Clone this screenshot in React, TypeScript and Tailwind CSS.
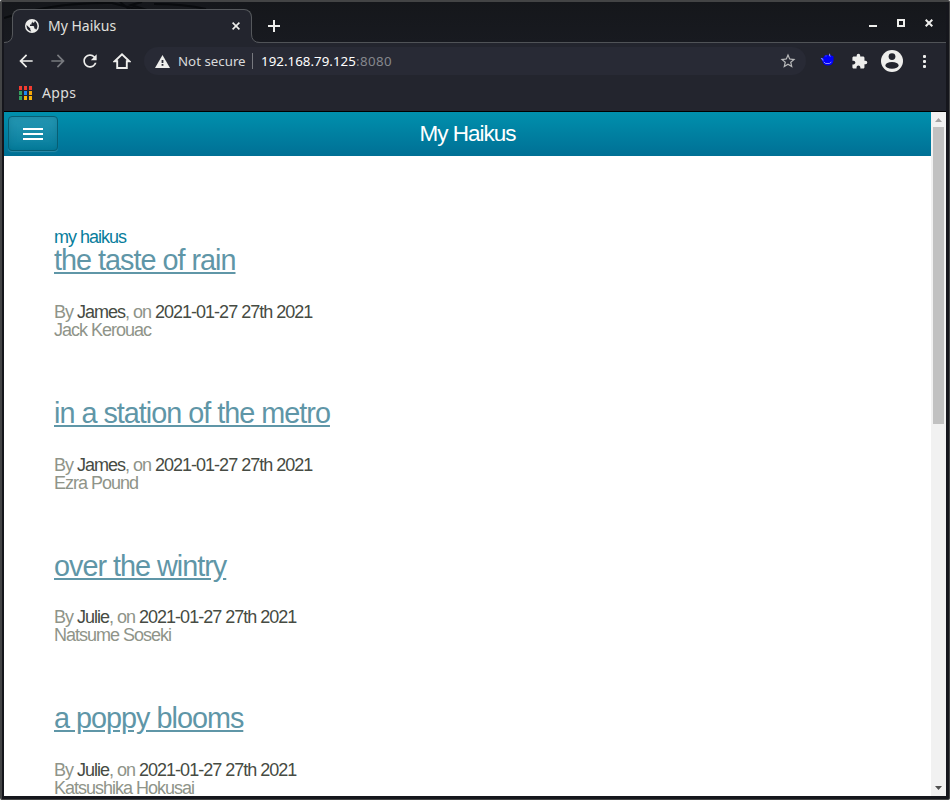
import React from "react";

const haikus = [
  { title: "the taste of rain", by: "James", author: "Jack Kerouac" },
  { title: "in a station of the metro", by: "James", author: "Ezra Pound" },
  { title: "over the wintry", by: "Julie", author: "Natsume Soseki" },
  { title: "a poppy blooms", by: "Julie", author: "Katsushika Hokusai" },
];

const appColors = [
  "bg-[#f23b30]", "bg-[#f23b30]", "bg-[#f23b30]",
  "bg-[#34a060]", "bg-[#1e88f0]", "bg-[#f5a70a]",
  "bg-[#34a060]", "bg-[#fbb508]", "bg-[#fbb508]",
];

function Icon({ d, className }: { d: string; className: string }) {
  return (
    <svg viewBox="0 0 24 24" className={`block shrink-0 fill-current ${className}`}>
      <path d={d} />
    </svg>
  );
}

function TitleBar() {
  return (
    <div className="relative flex h-[41px] border-b border-[#505357] bg-linear-to-b from-[#15171b] to-[#181a20]">
      <svg className="absolute left-0 top-0 h-[18px] w-[230px]" viewBox="0 0 230 18" fill="none">
        <path d="M0 16Q50 0 108 1L140 9M116 0l10 8M138 0l-11 3 16 5M150 2q30 0 52 5" stroke="#090b0e" strokeWidth="2" />
      </svg>
      <div className="relative ml-[8px] mt-[7px] flex h-[34px] w-[240px] rounded-t-[8px] border border-b-0 border-[#55585c] bg-[#23252e] text-[#e0e0de]">
        <svg className="absolute -left-[9px] bottom-0 h-[9px] w-[9px]" viewBox="0 0 9 9">
          <path d="M9 0v9H0Q8 8 8.5 0" fill="#23252e" />
          <path d="M0 8.5Q8.5 8.5 8.5 0" stroke="#55585c" fill="none" />
        </svg>
        <svg className="absolute -right-[9px] bottom-0 h-[9px] w-[9px]" viewBox="0 0 9 9">
          <path d="M0 0v9h9Q1 8 .5 0" fill="#23252e" />
          <path d="M9 8.5Q.5 8.5.5 0" stroke="#55585c" fill="none" />
        </svg>
        <svg viewBox="0 0 14 14" className="ml-[12px] mt-[9px] h-[14px] w-[14px] shrink-0">
          <circle cx="7" cy="7" r="7" fill="#eeeeec" />
          <path d="M8 1.2v1.4L6.5 4v1.4H5v1.5h3.4l.8.8v1.8h.8l1.2 1.2C13 8.5 13 5 10 2L9 3.7H7.8V2.4zM1.6 6.1l3.7 3.4v1.2l1 1.8C3.8 12.3 1.2 10 1.6 6.1z" fill="#23252e" />
        </svg>
        <span className="ml-[9px] mt-[6px] whitespace-nowrap text-[14px] leading-[20px]">My Haikus</span>
        <svg className="ml-auto mr-[11px] mt-[12px] h-[8px] w-[8px]" viewBox="0 0 8 8">
          <path d="m.6.6 6.8 6.8m0-6.8L.6 7.4" stroke="#eeeeec" strokeWidth="1.6" />
        </svg>
      </div>
      <svg className="ml-[16px] mt-[18px] h-[12px] w-[12px]" viewBox="0 0 12 12">
        <path d="M6 0v12M0 6h12" stroke="#eeeeec" strokeWidth="2" />
      </svg>
      <div className="ml-auto mr-[13px] mt-[17px] flex h-[8px] items-end">
        <div className="h-[2px] w-[8px] bg-[#eeeeec]" />
        <div className="ml-[20px] h-[8px] w-[8px] border-2 border-[#eeeeec]" />
        <svg className="ml-[20px] h-[8px] w-[8px]" viewBox="0 0 8 8">
          <path d="m.7.7 6.6 6.6m0-6.6L.7 7.3" stroke="#eeeeec" strokeWidth="2" />
        </svg>
      </div>
    </div>
  );
}

function Toolbar() {
  return (
    <div className="h-[69px] border-b border-black bg-[#23252e] text-[#eeeeec]">
      <div className="flex h-[36px] items-center pl-[12px]">
        <Icon className="h-5 w-5" d="M20 11H7.83l5.59-5.59L12 4l-8 8 8 8 1.41-1.41L7.83 13H20v-2z" />
        <Icon className="ml-[12px] h-5 w-5 text-[#77797e]" d="m12 4-1.41 1.41L16.17 11H4v2h12.17l-5.58 5.59L12 20l8-8z" />
        <Icon className="ml-[12px] h-5 w-5" d="M17.65 6.35C16.2 4.9 14.21 4 12 4c-4.42 0-7.99 3.58-7.99 8s3.57 8 7.99 8c3.73 0 6.84-2.55 7.73-6h-2.08c-.82 2.33-3.04 4-5.65 4-3.31 0-6-2.69-6-6s2.69-6 6-6c1.66 0 3.14.69 4.22 1.78L13 11h7V4l-2.35 2.35z" />
        <svg viewBox="0 0 18 18" className="ml-[13px] h-[18px] w-[18px] shrink-0">
          <path d="m1.7 9.2 7.3-7 7.3 7h-2.5V16H4.2V9.2z" fill="none" stroke="currentColor" strokeWidth="1.9" />
        </svg>
        <div className="ml-[13px] flex h-[28px] w-[662px] shrink-0 items-center rounded-full bg-[#282a35]">
          <svg className="ml-[11px] h-[13px] w-[15px]" viewBox="0 0 15 13">
            <path d="M7.5 0 15 13H0z" fill="#eeeeec" />
            <path d="M6.6 5h1.8v3H6.6zm0 4h1.8v1.8H6.6z" fill="#282a35" />
          </svg>
          <span className="ml-[8px] w-[67px] whitespace-nowrap text-[13.3px] leading-5 text-[#d9dadb]">Not secure</span>
          <span className="ml-[7px] h-4 w-px bg-[#77797f]" />
          <span className="ml-[8px] whitespace-nowrap text-[13.3px] leading-5 tracking-[0.04px] text-white">192.168.79.125<span className="tracking-[0.45px] text-[#85878d]">:8080</span></span>
          <Icon className="ml-auto mr-[9px] h-[18px] w-[18px] text-[#b9babb]" d="m22 9.24-7.19-.62L12 2 9.19 8.63 2 9.24l5.46 4.73L5.82 21 12 17.27 18.18 21l-1.63-7.03L22 9.24zM12 15.4l-3.76 2.27 1-4.28-3.32-2.88 4.38-.38L12 6.1l1.71 4.04 4.38.38-3.32 2.88 1 4.28L12 15.4z" />
        </div>
        <svg className="-mt-[3px] ml-[14px] h-[13px] w-[14px] shrink-0" viewBox="0 0 14 14">
          <path d="m0 5 3 .5L4 3l3-1 2 .5 1-2 1 2 3 1v5q-1 5-6 5-5 0-6-5z" fill="#0000fa" />
          <path d="m.5 6 1.8.3.5 2M5.5 3.2h.8M9.8.8v2.4l1 .4M3.5 9.5l2 1.8h4l2.2-1.5" fill="none" stroke="#dde" strokeWidth=".7" />
        </svg>
        <Icon className="ml-[17px] mr-px h-[17px] w-[17px]" d="M20.5 11H19V7c0-1.1-.9-2-2-2h-4V3.5a2.5 2.5 0 0 0-5 0V5H4c-1.1 0-1.99.9-1.99 2v3.8H3.5c1.49 0 2.7 1.21 2.7 2.7s-1.21 2.7-2.7 2.7H2V20c0 1.1.9 2 2 2h3.8v-1.5c0-1.49 1.21-2.7 2.7-2.7s2.7 1.21 2.7 2.7V22H17c1.1 0 2-.9 2-2v-4h1.5a2.5 2.5 0 0 0 0-5z" />
        <svg className="ml-[12px] h-[22px] w-[22px] shrink-0" viewBox="0 0 22 22">
          <circle cx="11" cy="11" r="11" fill="#eeeeec" />
          <circle cx="11" cy="6.6" r="3.4" fill="#23252e" />
          <ellipse cx="11" cy="15.4" rx="6.6" ry="3.3" fill="#23252e" />
        </svg>
        <div className="ml-[20px] flex flex-col gap-[2px]">
          <i className="h-[3px] w-[3px] rounded-[1px] bg-[#eeeeec]" />
          <i className="h-[3px] w-[3px] rounded-[1px] bg-[#eeeeec]" />
          <i className="h-[3px] w-[3px] rounded-[1px] bg-[#eeeeec]" />
        </div>
      </div>
      <div className="flex pl-[15px] pt-[4px]">
        <div className="mt-[3px] grid h-[14px] w-[13px] grid-cols-3 grid-rows-3 gap-x-[2px] gap-y-px">
          {appColors.map((c, i) => (
            <span key={i} className={`${c} h-[4px] w-[3px]`} />
          ))}
        </div>
        <span className="ml-[10px] text-[14px] leading-5 tracking-[0.4px] text-[#dededc]">Apps</span>
      </div>
    </div>
  );
}

export default function App() {
  return (
    <div className="flex h-[800px] w-[950px] flex-col overflow-hidden rounded-[2px] border-b border-l-2 border-r border-t-2 border-[#434445] bg-[#15161c] pb-[3px] pl-[2px] pr-[3px] font-['Noto_Sans',sans-serif]">
      <TitleBar />
      <Toolbar />
      <div className="flex min-h-0 flex-1 bg-white font-['Liberation_Sans',Arial,sans-serif]">
        <main className="min-w-0 flex-1 overflow-hidden text-[18px] leading-[18px] tracking-[-1px] text-[#8f9489]">
          <header className="grid h-[44px] grid-cols-[50px_1fr_50px] items-center bg-linear-to-b from-[#0090ad] to-[#007095] px-[4px]">
            <button className="-mt-px flex h-[35px] w-[50px] flex-col items-center justify-center gap-[3px] rounded-[4px] border border-[#075e73] bg-linear-to-b from-[#2498b4] to-[#047d9c] pt-px shadow-[0_1px_1px_rgba(255,255,255,0.18),inset_0_0_7px_rgba(0,90,115,0.3)]">
              <span className="h-[2px] w-5 bg-white" />
              <span className="h-[2px] w-5 bg-white" />
              <span className="h-[2px] w-5 bg-white" />
            </button>
            <h1 className="text-center text-[22.5px] leading-[28px] text-white">My Haikus</h1>
          </header>
          <div className="pl-[50px] pt-[72px]">
            <p className="text-[#077d9c]">my haikus</p>
            {haikus.map((h) => (
              <article key={h.title} className="h-[152.8px] whitespace-nowrap">
                <h2 className="text-[28.8px] leading-[28.8px] text-[#5f96a7]">
                  <a className="underline">{h.title}</a>
                </h2>
                <p className="mt-[28px]">
                  By <span className="text-[#464b43]">{h.by}</span>, on <span className="text-[#464b43]">2021-01-27 27th 2021</span>
                </p>
                <p>{h.author}</p>
              </article>
            ))}
          </div>
        </main>
        <div className="flex w-[15px] shrink-0 flex-col items-center bg-[#f1f1f1]">
          <svg className="mt-[6px] h-[4px] w-[7px]" viewBox="0 0 7 4">
            <path d="M0 4 3.5 0 7 4z" fill="#a3a3a3" />
          </svg>
          <div className="mt-[5px] h-[297px] w-[11px] bg-[#c1c1c1]" />
          <svg className="mb-[6px] mt-auto h-[4px] w-[7px]" viewBox="0 0 7 4">
            <path d="M0 0h7L3.5 4z" fill="#505050" />
          </svg>
        </div>
      </div>
    </div>
  );
}
